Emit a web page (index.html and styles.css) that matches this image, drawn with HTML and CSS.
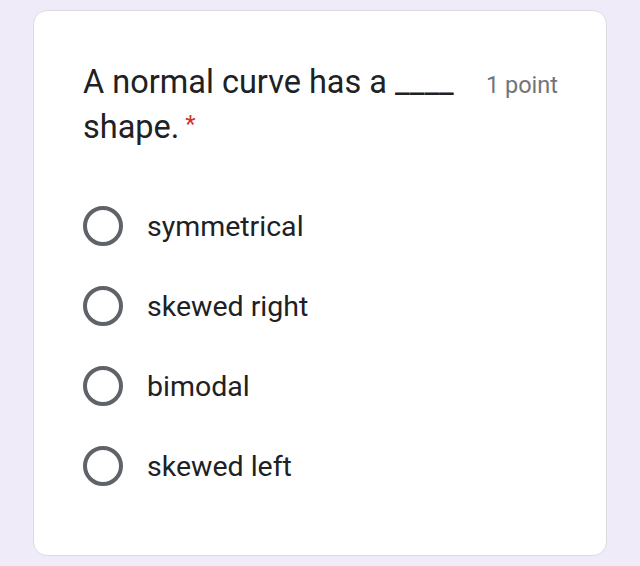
FILE: index.html
```html
<!DOCTYPE html>
<html lang="en">
<head>
    <meta charset="UTF-8">
    <meta name="viewport" content="width=device-width, initial-scale=1.0">
    <title>Quiz question</title>
    <link rel="stylesheet" href="styles.css">
</head>
<body>
    <div class="card">
        <div class="question-head">
            <div class="question-title">A normal curve has a ____ shape.<span class="required"> *</span></div>
            <div class="points">1 point</div>
        </div>
        <div class="options">
            <label class="option"><span class="radio"></span><span class="option-text">symmetrical</span></label>
            <label class="option"><span class="radio"></span><span class="option-text">skewed right</span></label>
            <label class="option"><span class="radio"></span><span class="option-text">bimodal</span></label>
            <label class="option"><span class="radio"></span><span class="option-text">skewed left</span></label>
        </div>
    </div>
</body>
</html>
```

FILE: styles.css
```css
body {
    margin: 0;
    padding: 10px 33px 0 33px;
    background-color: #f0ebf8;
    font-family: Roboto, "Liberation Sans", Arial, sans-serif;
}
.card {
    background-color: #fff;
    border: 1px solid #dadce0;
    border-radius: 14px;
    height: 546px;
    padding: 49px 48px 0 49px;
    box-sizing: border-box;
}
.question-head { display: flex; justify-content: space-between; align-items: baseline; gap: 24px; }
.question-title {
    color: #202124;
    font-size: 32.5px;
    line-height: 45px;
    max-width: 395px;
}
.required {
    color: #d93025;
    font-size: 24px;
    line-height: 1;
    vertical-align: 6px;
}
.points {
    color: #70757a;
    font-size: 23.5px;
    white-space: nowrap;
}
.options { margin-top: 36px; }
.option {
    display: flex;
    align-items: center;
    height: 80px;
    gap: 24px;
}
.radio {
    width: 40px;
    height: 40px;
    border: 4px solid #5f6368;
    border-radius: 50%;
    box-sizing: border-box;
    flex-shrink: 0;
}
.option-text {
    color: #202124;
    font-size: 28.5px;
}
```
